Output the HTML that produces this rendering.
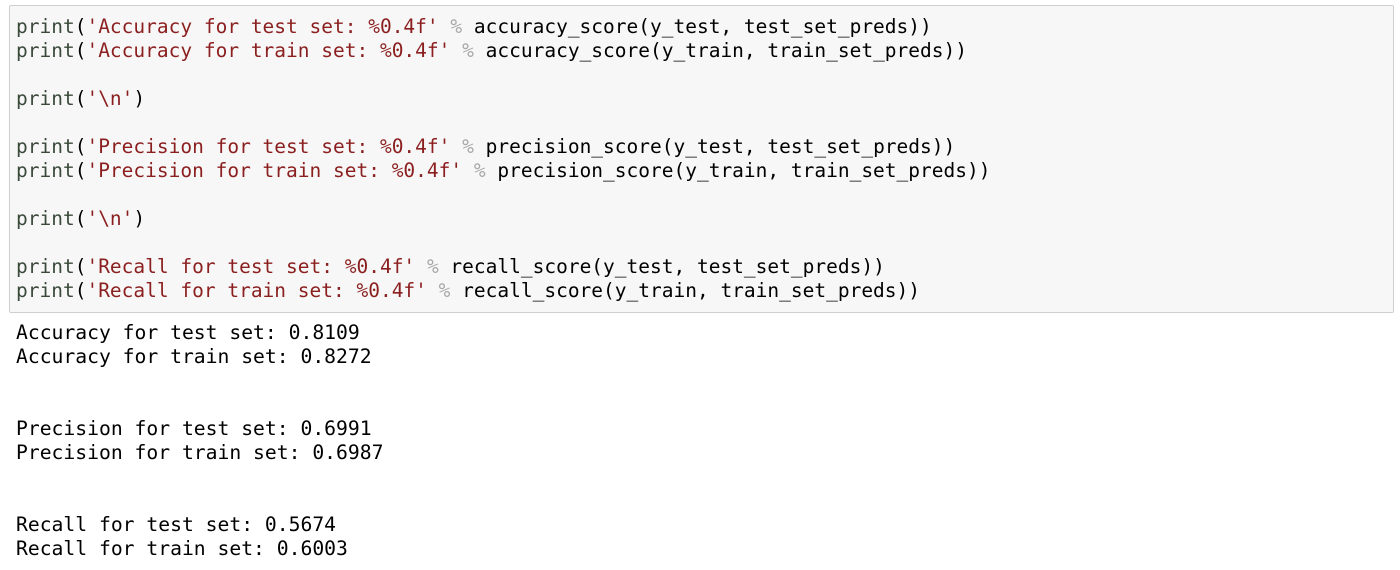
<!DOCTYPE html>
<html><head><style>
body{margin:0;background:#fff;width:1400px;height:570px;overflow:hidden;font-family:"DejaVu Sans Mono","Liberation Mono",monospace;}
.box{position:absolute;left:9px;top:5px;width:1383px;height:306px;background:#f7f7f7;border:1px solid #cfcfcf;border-radius:2px;}
pre{margin:0;font-family:inherit;font-size:19.5px;line-height:24px;}
.code{position:absolute;left:16px;top:15px;color:#000;}
.out{position:absolute;left:16px;top:321px;color:#000;font-size:19.7px;}
.b{color:#3a4a3a}.s{color:#8b1f1f}.o{color:#a8a8a8}
</style></head><body>
<div class="box"></div>
<pre class="code"><span class="b">print</span>(<span class="s">'Accuracy for test set: %0.4f'</span> <span class="o">%</span> accuracy_score(y_test, test_set_preds))
<span class="b">print</span>(<span class="s">'Accuracy for train set: %0.4f'</span> <span class="o">%</span> accuracy_score(y_train, train_set_preds))

<span class="b">print</span>(<span class="s">'\n'</span>)

<span class="b">print</span>(<span class="s">'Precision for test set: %0.4f'</span> <span class="o">%</span> precision_score(y_test, test_set_preds))
<span class="b">print</span>(<span class="s">'Precision for train set: %0.4f'</span> <span class="o">%</span> precision_score(y_train, train_set_preds))

<span class="b">print</span>(<span class="s">'\n'</span>)

<span class="b">print</span>(<span class="s">'Recall for test set: %0.4f'</span> <span class="o">%</span> recall_score(y_test, test_set_preds))
<span class="b">print</span>(<span class="s">'Recall for train set: %0.4f'</span> <span class="o">%</span> recall_score(y_train, train_set_preds))</pre>
<pre class="out">Accuracy for test set: 0.8109
Accuracy for train set: 0.8272


Precision for test set: 0.6991
Precision for train set: 0.6987


Recall for test set: 0.5674
Recall for train set: 0.6003</pre>
</body></html>
